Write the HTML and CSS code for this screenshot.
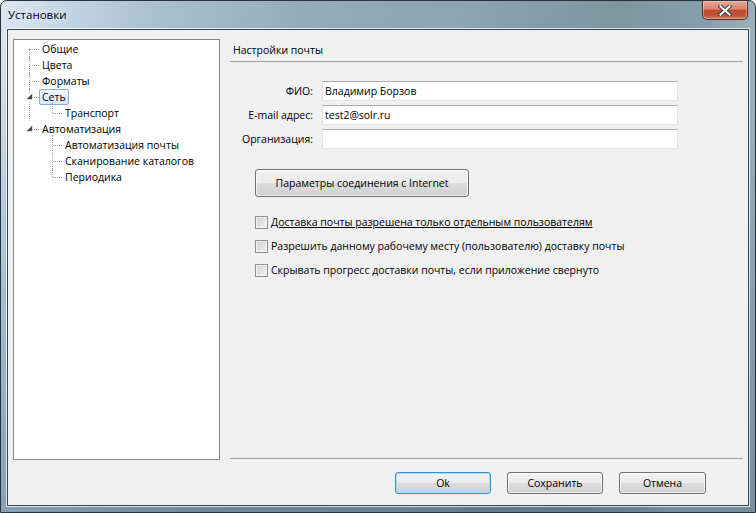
FILE: index.html
```html
<!DOCTYPE html>
<html lang="ru">
<head>
    <meta charset="UTF-8">
    <title>Установки</title>
    <link rel="stylesheet" href="styles.css">
</head>
<body>

<div class="window">
    <div class="titlebar">
        <span class="title">Установки</span>
        <button class="close-btn" type="button" title="Закрыть">
            <svg width="14" height="11" viewBox="0 0 14 11">
                <path d="M2.5 1.5 L11.5 9.5 M11.5 1.5 L2.5 9.5" stroke="#3b3b3b" stroke-width="4.2" stroke-linecap="square"/>
                <path d="M2.5 1.5 L11.5 9.5 M11.5 1.5 L2.5 9.5" stroke="#ffffff" stroke-width="2.2" stroke-linecap="square"/>
            </svg>
        </button>
    </div>

    <div class="client">
        <div class="main">
            <div class="tree">
                <ul class="tree-root">
                    <li><span class="node">Общие</span></li>
                    <li><span class="node">Цвета</span></li>
                    <li><span class="node">Форматы</span></li>
                    <li class="open">
                        <span class="expander"><svg width="7" height="7" viewBox="0 0 7 7"><polygon points="6,1 6,6 1,6" fill="#3c3c3c" stroke="#6e6e6e" stroke-width="0.6"/></svg></span>
                        <span class="node selected">Сеть</span>
                        <ul>
                            <li><span class="node">Транспорт</span></li>
                        </ul>
                    </li>
                    <li class="open">
                        <span class="expander"><svg width="7" height="7" viewBox="0 0 7 7"><polygon points="6,1 6,6 1,6" fill="#3c3c3c" stroke="#6e6e6e" stroke-width="0.6"/></svg></span>
                        <span class="node">Автоматизация</span>
                        <ul>
                            <li><span class="node">Автоматизация почты</span></li>
                            <li><span class="node">Сканирование каталогов</span></li>
                            <li><span class="node">Периодика</span></li>
                        </ul>
                    </li>
                </ul>
            </div>

            <div class="pane">
                <div class="pane-header">Настройки почты</div>

                <div class="fields">
                    <label for="fio">ФИО:</label>
                    <input type="text" id="fio" value="Владимир Борзов">

                    <label for="email">E-mail адрес:</label>
                    <input type="text" id="email" value="test2@solr.ru">

                    <label for="org">Организация:</label>
                    <input type="text" id="org" value="">
                </div>

                <button class="btn btn-wide" type="button">Параметры соединения с Internet</button>

                <div class="options">
                    <label class="check"><span class="box"></span><span class="underlined">Доставка почты разрешена только отдельным пользователям</span></label>
                    <label class="check"><span class="box"></span><span>Разрешить данному рабочему месту (пользователю) доставку почты</span></label>
                    <label class="check"><span class="box"></span><span>Скрывать прогресс доставки почты, если приложение свернуто</span></label>
                </div>
            </div>
        </div>

        <div class="actions">
            <button class="btn btn-default" type="button">Ok</button>
            <button class="btn" type="button">Сохранить</button>
            <button class="btn btn-cancel" type="button">Отмена</button>
        </div>
    </div>
</div>

</body>
</html>
```

FILE: styles.css
```css
* {
    box-sizing: border-box;
}
body {
    margin: 0;
    padding: 0;
    background: #ffffff;
    font-family: "Open Sans", "DejaVu Sans", sans-serif;
    font-size: 10.5px;
    color: #000;
}

/* outer frame */
.window {
    width: 756px;
    height: 513px;
    display: flex;
    flex-direction: column;
    padding: 0 6px 6px 6px;
    border: 1px solid #27343d;
    border-radius: 7px 7px 0 0;
    background:
        linear-gradient(to bottom, rgba(40, 70, 95, 0) 40px, rgba(40, 70, 95, 0.35) 100%),
        linear-gradient(100deg, #dbe8f3 0px, #c4d7e6 60px, #a8bfce 160px, #93abba 300px, #8da5b3 450px, #7c95a1 610px, #879fac 700px, #a0b4c0 756px);
}
.titlebar {
    height: 28px;
    display: flex;
    justify-content: space-between;
    align-items: flex-start;
    padding-left: 1px;
}
.title {
    font-size: 11.5px;
    line-height: 28px;
    text-shadow: 0 0 6px rgba(255, 255, 255, 0.9);
}
.close-btn {
    width: 46px;
    height: 19px;
    margin-right: 1px;
    padding: 0;
    display: flex;
    align-items: center;
    justify-content: center;
    border: 1px solid #5b2b22;
    border-top: none;
    border-radius: 0 0 5px 5px;
    background: linear-gradient(#e7a995 0%, #d98570 45%, #c3492e 52%, #c0553a 80%, #d27a60 100%);
    box-shadow: inset 0 0 0 1px rgba(255, 220, 200, 0.45);
}

/* client area */
.client {
    flex: 1;
    display: flex;
    flex-direction: column;
    padding: 9px 5px 0 5px;
    background: #f0f0f0;
    border: 1px solid #34454f;
    box-shadow: 0 0 0 1px rgba(255, 255, 255, 0.75);
}
.main {
    height: 421px;
    display: flex;
    gap: 10px;
}

/* tree */
.tree {
    width: 207px;
    background: #fff;
    border: 1px solid #828790;
    padding-top: 1px;
}
.tree ul {
    list-style: none;
    margin: 0;
    padding: 0;
}
.tree-root {
    padding-left: 5px !important;
}
.tree li {
    position: relative;
    padding-left: 20px;
    line-height: 14px;
}
.tree li ul {
    padding-left: 3px;
}
.tree li::before {
    content: "";
    position: absolute;
    left: 10px;
    top: 0;
    height: 100%;
    border-left: 1px dotted #a0a0a0;
}
.tree-root > li:first-child::before {
    top: 8px;
}
.tree li:last-child::before {
    height: 8px;
}
.tree li li:first-child::before {
    top: -2px;
}
.tree li li:only-child::before {
    height: 10px;
}
.tree-root > li:last-child::before {
    height: 0;
}
.tree li::after {
    content: "";
    position: absolute;
    left: 11px;
    top: 8px;
    width: 9px;
    border-top: 1px dotted #a0a0a0;
}
.expander {
    position: absolute;
    left: 7px;
    top: 4px;
    width: 7px;
    height: 8px;
    background: #fff;
    z-index: 1;
}
.expander svg {
    display: block;
}
.node {
    display: inline-block;
    padding: 0 2px;
    border: 1px solid transparent;
    border-radius: 2px;
    white-space: nowrap;
}
.node.selected {
    border-color: #84acdd;
    background: linear-gradient(#f2f8fe, #d6e7fb);
}

/* right pane */
.pane {
    width: 513px;
    height: 420px;
    display: flex;
    flex-direction: column;
    align-items: flex-start;
    border-bottom: 1px solid #a0a0a0;
}
.pane-header {
    width: 100%;
    height: 23px;
    padding: 3px 0 0 3px;
    line-height: 16px;
    border-bottom: 1px solid #a0a0a0;
}
.fields {
    margin-top: 19px;
    display: grid;
    grid-template-columns: 83px 356px;
    grid-auto-rows: 20px;
    column-gap: 9px;
    row-gap: 4px;
}
.fields label {
    text-align: right;
    line-height: 20px;
}
.fields input {
    height: 20px;
    padding: 0 2px;
    font: inherit;
    color: #000;
    background: #fff;
    border: 1px solid #e2e3ea;
    border-top-color: #abadb3;
    border-bottom-color: #e3e9ef;
    outline: none;
}

/* buttons */
.btn {
    height: 22px;
    padding: 0;
    font: inherit;
    color: #000;
    border: 1px solid #707070;
    border-radius: 3px;
    background: linear-gradient(#f2f2f2 0%, #ebebeb 50%, #dddddd 51%, #cfcfcf 100%);
    box-shadow: inset 0 0 0 1px rgba(255, 255, 255, 0.7);
    cursor: pointer;
}
.btn-wide {
    width: 214px;
    height: 28px;
    margin: 20px 0 0 25px;
}
.btn-default {
    border-color: #3c8fd0;
    box-shadow: inset 0 0 0 1px #a6def8;
}

.options {
    margin: 17px 0 0 25px;
    display: flex;
    flex-direction: column;
    gap: 8px;
}
.check {
    display: flex;
    align-items: center;
    gap: 3px;
    height: 16px;
    white-space: nowrap;
}
.box {
    width: 13px;
    height: 13px;
    border: 1px solid #8f8f8f;
    background: linear-gradient(135deg, #cdcfd2, #f3f3f3);
    box-shadow: inset 0 0 0 1px #f4f4f4;
}
.underlined {
    text-decoration: underline;
}

.actions {
    margin-top: 12px;
    display: flex;
    justify-content: flex-end;
    gap: 16px;
    padding-right: 37px;
}
.actions .btn {
    width: 96px;
}
.actions .btn-cancel {
    width: 87px;
}
```
